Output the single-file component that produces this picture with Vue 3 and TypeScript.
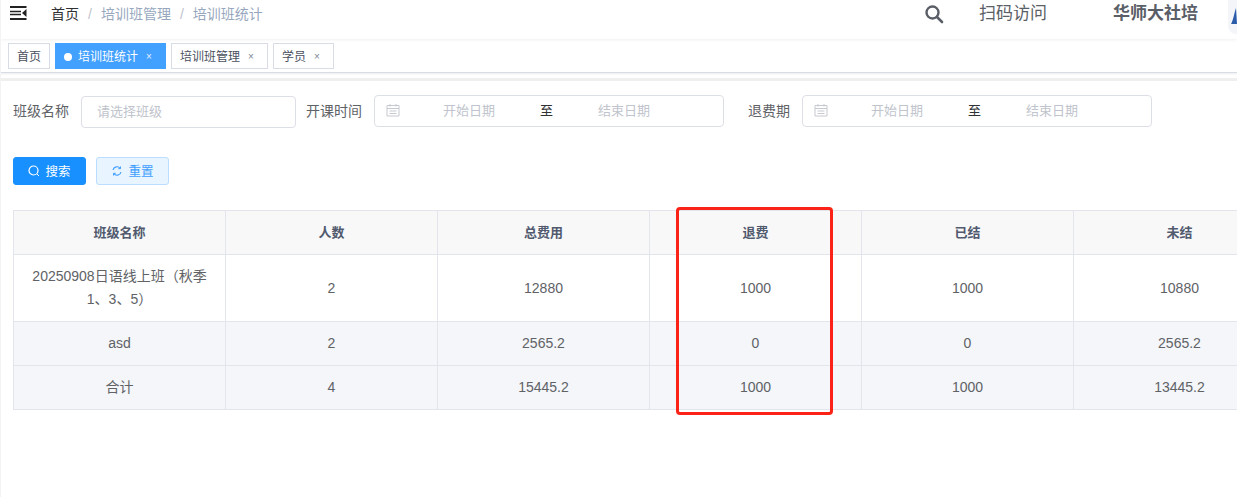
<script setup lang="ts">
interface Row { name: string; count: string; total: string; refund: string; settled: string; unsettled: string }
const rows: Row[] = [
  { name: '20250908日语线上班（秋季1、3、5）', count: '2', total: '12880', refund: '1000', settled: '1000', unsettled: '10880' },
  { name: 'asd', count: '2', total: '2565.2', refund: '0', settled: '0', unsettled: '2565.2' },
  { name: '合计', count: '4', total: '15445.2', refund: '1000', settled: '1000', unsettled: '13445.2' },
]
const heads = ['班级名称', '人数', '总费用', '退费', '已结', '未结']
</script>

<template>
  <div class="page">
    <header class="navbar">
      <svg class="burger" width="17" height="14" viewBox="0 0 17 14">
        <path d="M0 1h16.500M0 13h16.500" stroke="#222" stroke-width="1.800" fill="none" />
        <path d="M0 5.500h11M0 8.500h11" stroke="#222" stroke-width="1.500" fill="none" />
        <path d="M16.500 3v8L12 7z" fill="#222" />
      </svg>
      <nav class="crumbs">
        <span class="crumb-home">首页</span>
        <span class="sep">/</span>
        <span>培训班管理</span>
        <span class="sep">/</span>
        <span>培训班统计</span>
      </nav>
      <div class="nav-right">
        <svg class="search" width="20" height="20" viewBox="0 0 20 20">
          <circle cx="8.500" cy="8.500" r="6" stroke="#5a5e66" stroke-width="2.400" fill="none" />
          <path d="M13 13l5 5" stroke="#5a5e66" stroke-width="2.600" stroke-linecap="round" />
        </svg>
        <span class="scan">扫码访问</span>
        <strong class="org">华师大社培</strong>
        <div class="avatar"><svg width="6" height="16" viewBox="0 0 6 16"><path d="M0 16C2 13 3 6 5 0L6 16z" fill="#2a5caa" /></svg></div>
      </div>
    </header>

    <div class="tags">
      <span class="tag">首页</span>
      <span class="tag active"><i class="dot"></i>培训班统计<em>×</em></span>
      <span class="tag">培训班管理<em>×</em></span>
      <span class="tag">学员<em>×</em></span>
    </div>
    <div class="strip"></div>

    <main class="content">
      <form class="filters" @submit.prevent>
        <label class="lbl">班级名称</label>
        <div class="input select">请选择班级</div>
        <label class="lbl">开课时间</label>
        <div class="input range first">
          <svg class="cal" width="14" height="14" viewBox="0 0 14 14">
            <path d="M1 2.500h12v10.500H1zM1 5.500h12M4 1v2.500M10 1v2.500M3.500 8h7M3.500 10.500h7" stroke="#c6c9cf" fill="none" />
          </svg>
          <span class="ph start">开始日期</span><span class="to">至</span><span class="ph end">结束日期</span>
        </div>
        <label class="lbl">退费期</label>
        <div class="input range second">
          <svg class="cal" width="14" height="14" viewBox="0 0 14 14">
            <path d="M1 2.500h12v10.500H1zM1 5.500h12M4 1v2.500M10 1v2.500M3.500 8h7M3.500 10.500h7" stroke="#c6c9cf" fill="none" />
          </svg>
          <span class="ph start">开始日期</span><span class="to">至</span><span class="ph end">结束日期</span>
        </div>
      </form>

      <div class="buttons">
        <button class="btn primary" type="button">
          <svg width="12" height="12" viewBox="0 0 12 12"><circle cx="5.500" cy="5.500" r="4.500" stroke="#fff" stroke-width="1.200" fill="none" /><path d="M9 9l2 2" stroke="#fff" /></svg>
          <span class="btn-text">搜索</span>
        </button>
        <button class="btn plain" type="button">
          <svg width="12" height="12" viewBox="0 0 12 12"><path d="M2 5A4 4 0 0 1 9.200 3.500M10 7A4 4 0 0 1 2.800 8.500" stroke="#409eff" stroke-width="1.200" fill="none" /><path d="M9.500 1.500v2.200H7.300M2.500 10.500V8.300h2.200" stroke="#409eff" fill="none" /></svg>
          <span class="btn-text">重置</span>
        </button>
      </div>

      <div class="table-wrap">
        <table class="table">
          <thead>
            <tr><th v-for="h in heads" :key="h">{{ h }}</th></tr>
          </thead>
          <tbody>
            <tr v-for="r in rows" :key="r.name">
              <td><div class="name">{{ r.name }}</div></td>
              <td>{{ r.count }}</td>
              <td>{{ r.total }}</td>
              <td>{{ r.refund }}</td>
              <td>{{ r.settled }}</td>
              <td>{{ r.unsettled }}</td>
            </tr>
          </tbody>
        </table>
        <div class="mark"></div>
      </div>
    </main>
  </div>
</template>

<style>
html, body { margin: 0; background: #fff; overflow: hidden; }
</style>

<style scoped>
.page {
  width: 1237px;
  height: 497px;
  overflow: hidden;
  box-sizing: border-box;
  border-left: 1px solid #f3f3f3;
  font-family: "Liberation Sans", "Noto Sans CJK SC", sans-serif;
  color: #606266;
  font-size: 14px;
}
.navbar {
  height: 39px;
  display: flex;
  align-items: flex-start;
  box-shadow: 0 1px 3px rgba(0, 21, 41, 0.06);
  position: relative;
}
.burger { margin: 6px 0 0 9px; }
.crumbs { margin: 6px 0 0 24px; font-size: 14px; line-height: 17px; color: #97a8be; display: flex; }
.crumb-home { color: #303133; }
.sep { margin: 0 9px; color: #c0c4cc; }
.nav-right { margin-left: auto; display: flex; align-items: flex-start; }
.search { margin: 4px 0 0 0; }
.scan { margin: 4px 0 0 35px; font-size: 17px; line-height: 20px; color: #5a5e66; width: 68px; white-space: nowrap; }
.org { margin: 4px 0 0 66px; font-size: 17px; line-height: 20px; color: #5a5e66; width: 85px; white-space: nowrap; }
.avatar {
  margin-left: 30px;
  width: 9px;
  height: 34px;
  background: #f3f5f9;
  border-radius: 0 0 0 8px;
  padding: 8px 0 0 3px;
  box-sizing: border-box;
}
.tags {
  height: 34px;
  box-sizing: border-box;
  padding: 4px 0 0 7px;
  display: flex;
  gap: 5px;
  align-items: flex-start;
  border-bottom: 1px solid #d8dce5;
  box-shadow: 0 1px 2px rgba(0, 0, 0, 0.08);
}
.tag {
  height: 26px;
  box-sizing: border-box;
  border: 1px solid #d8dce5;
  padding: 1px 8px 0;
  font-size: 12px;
  line-height: 24px;
  color: #495060;
  display: flex;
  align-items: center;
}
.tag em { font-style: normal; font-size: 10px; color: #7d8694; margin: 0 5px 0 8px; width: 6px; }
.tag.active { background: #42a0ff; border-color: #42a0ff; color: #fff; }
.tag.active em { color: #e6f1ff; }
.dot { width: 8px; height: 8px; border-radius: 50%; background: #fff; margin-right: 6px; }
.strip { height: 3px; margin-top: 5px; background: #efefef; }
.content { padding: 14px 0 0 12px; }
.filters { display: flex; align-items: center; height: 33px; }
.lbl { font-size: 14px; color: #606266; white-space: nowrap; padding-bottom: 3px; }
.input {
  box-sizing: border-box;
  height: 32px;
  border: 1px solid #dcdfe6;
  border-radius: 4px;
  font-size: 13px;
  color: #c0c4cc;
  display: flex;
  align-items: center;
  padding-bottom: 3px;
}
.select { width: 215px; margin: 0 10px 0 12px; padding-left: 15px; }
.range.first { width: 350px; margin: -1px 24px 0 12px; }
.range.second { width: 350px; margin: -1px 0 0 12px; }
.cal { margin-left: 11px; }
.ph { width: 52px; white-space: nowrap; }
.ph.start { margin-left: 43px; }
.ph.end { margin-left: 45px; }
.to { margin-left: 45px; color: #303133; }
.buttons { display: flex; gap: 10px; margin-top: 29px; }
.btn {
  width: 73px;
  height: 28px;
  box-sizing: border-box;
  border-radius: 3px;
  font: inherit;
  font-size: 12.5px;
  display: flex;
  align-items: center;
  justify-content: center;
  gap: 5px;
  padding: 0;
}
.btn-text { padding-bottom: 2px; }
.primary { background: #1890ff; border: 1px solid #1890ff; color: #fff; }
.plain { background: #e8f4ff; border: 1px solid #bbddff; color: #409eff; }
.table-wrap { position: relative; margin-top: 25px; width: 1272px; }
.table {
  border-collapse: collapse;
  table-layout: fixed;
  width: 1273px;
  border: 1px solid #e2e5ec;
  font-size: 14px;
}
.table th, .table td {
  border: 1px solid #e2e5ec;
  text-align: center;
  width: 212px;
  box-sizing: border-box;
  padding: 0;
}
.table th {
  height: 44px;
  padding-bottom: 2px;
  background: #f8f8f9;
  color: #515a6e;
  font-size: 13px;
  font-weight: 700;
}
.table td { height: 44px; color: #606266; line-height: 23px; }
.table tbody tr:first-child td { height: 67px; background: #fff; }
.table tbody tr { background: #f4f6fa; }
.name { padding: 0 10px; }
.mark {
  position: absolute;
  left: 663px;
  top: -3px;
  width: 151px;
  height: 202px;
  border: 3px solid #fb2217;
  border-radius: 4px;
  pointer-events: none;
}
</style>
